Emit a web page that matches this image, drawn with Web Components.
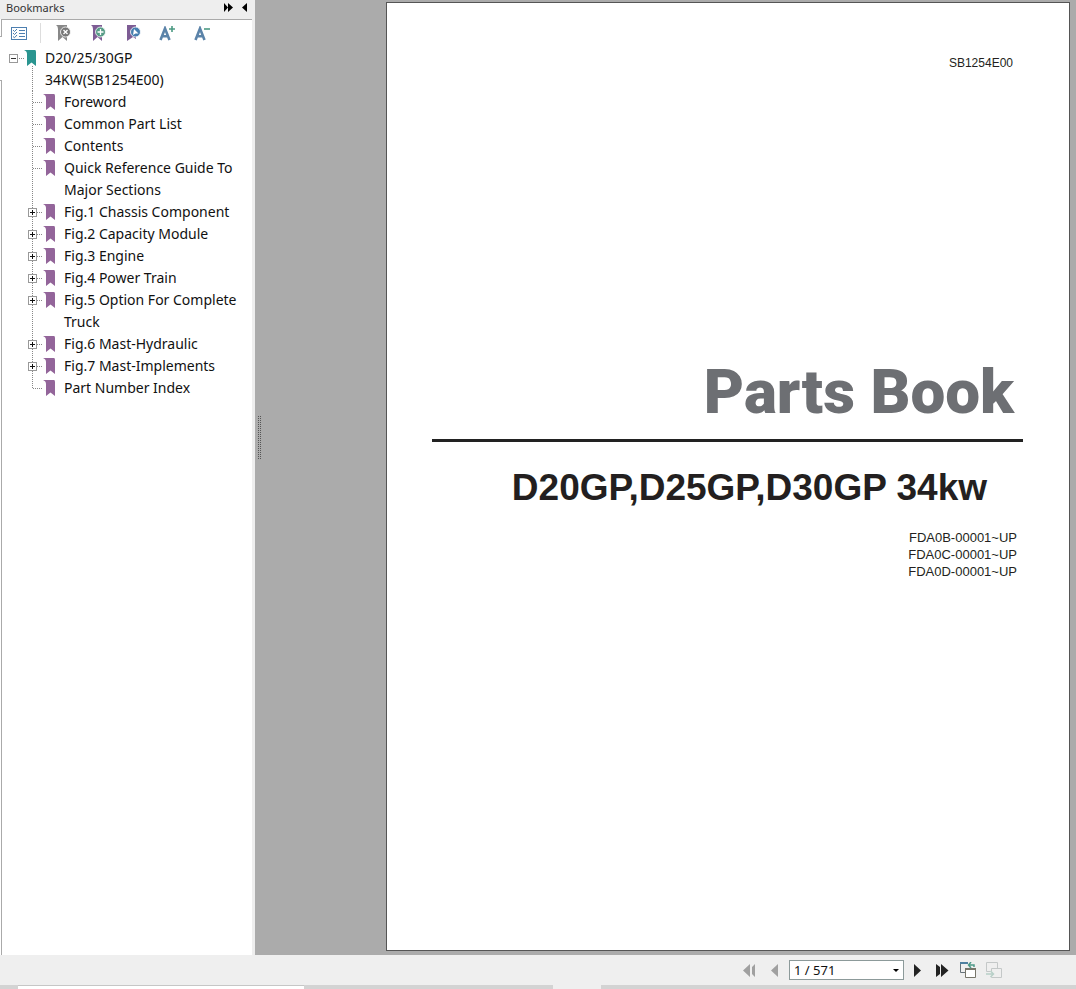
<!DOCTYPE html>
<html lang="en">
<head>
<meta charset="utf-8">
<title>Parts Book</title>
<style>
html,body{height:100%;margin:0}
body{font-family:"Noto Sans",sans-serif;background:#eee;color:#111}
</style>
</head>
<body>
<pdf-reader></pdf-reader>
<script>
const define=(name,html,setup)=>customElements.define(name,class extends HTMLElement{
  connectedCallback(){
    if(this.shadowRoot)return;
    const root=this.attachShadow({mode:'open'});
    const t=document.createElement('template');
    t.innerHTML=html;
    root.append(t.content.cloneNode(true));
    if(setup)setup(this,root);
  }
});

define('icon-button',`<style>
:host{display:flex;width:var(--w,25px);height:24px}
button{flex:1;display:flex;align-items:center;justify-content:center;padding:0;border:0;background:none;color:inherit}
</style><button type="button"><slot></slot></button>`,(el,root)=>{
  root.querySelector('button').setAttribute('aria-label',el.getAttribute('label'));
});

define('bookmark-item',`<style>
:host{display:grid;grid-template-columns:15px 12px 1fr;font-size:14px;line-height:22px;
 --across:repeating-linear-gradient(90deg,#888 0 1px,transparent 1px 2px);
 --down:repeating-linear-gradient(#888 0 1px,transparent 1px 2px)}
.rail{background:var(--down) 4px 0/1px 100% no-repeat,var(--across) 5px 11px/10px 1px no-repeat;padding-top:7px}
:host([last]) .rail{background-size:1px 11px,10px 1px}
:host([root]) .rail{background:var(--across) 10px 11px/5px 1px no-repeat}
.toggle{display:none;width:9px;height:9px;padding:0;border:1px solid #999;background:
 linear-gradient(#111,#111) center/5px 1px no-repeat,linear-gradient(#111,#111) center/1px 5px no-repeat,#fff}
:host([expandable]) .toggle{display:block}
:host([root]) .toggle{background:linear-gradient(#333,#333) center/5px 1px no-repeat,#fff}
.mark{display:flex;flex-direction:column;padding-top:3px;color:#93659a}
:host([root]) .mark{color:#2a9590}
.mark svg{flex:none}
:host([root]) .mark::after{content:"";flex:1;width:1px;margin-left:8px;background:var(--down)}
a{margin-left:9px;color:#111;text-decoration:none}
.kids{grid-column:1/-1;padding-left:19px}
</style>
<div class="rail"><button class="toggle" type="button" aria-label="Expand or collapse"></button></div>
<div class="mark"><svg width="12" height="16" viewBox="0 0 12 16"><path fill="currentColor" d="M0 0H11Q12 0 12 2V16L7.5 12.5L3 16V4Q3 1 0 0Z"/></svg></div>
<a href="#"><slot></slot></a>
<div class="kids"><slot name="child"></slot></div>`);

define('bookmark-panel',`<style>
:host{display:grid;grid-template-columns:2px 1fr 3px;grid-template-rows:19px 1fr;background:#eee;min-height:0}
header{grid-column:1/-1;display:flex;align-items:center;padding:0 3px 4px 6px;font-size:11px;line-height:15px;color:#333}
h2{margin:0 auto 0 0;font:inherit}
header icon-button{--w:16px;height:15px;color:#111}
.edge{display:flex;flex-direction:column;background:#fff}
.edge i{height:43px}
.edge::before{content:"";height:17px;border-right:1px solid #aaa;border-bottom:1px solid #aaa}
.edge::after{content:"";flex:1;border-right:1px solid #aaa;border-top:1px solid #aaa}
.body{background:#fff;border-top:1px solid #aaa}
.tools{display:flex;align-items:center;padding:1px 0 2px;height:24px}
.tools icon-button{--w:35px}
.tools icon-button:first-child{--w:34px}
.tools hr{width:1px;height:20px;margin:0 4px;border:0;background:#ddd}
.tree{padding-left:7px}
</style>
<header><h2>Bookmarks</h2>
<icon-button label="More panels"><svg width="9" height="9"><path d="M0 0L4 4.500L0 9ZM4 0L9 4.500L4 9Z"/></svg></icon-button>
<icon-button label="Collapse panel"><svg width="5" height="9"><path d="M5 0V9L0 4.500Z"/></svg></icon-button>
</header>
<div class="edge"><i></i></div>
<div class="body">
<div class="tools">
<icon-button label="Options"><svg width="16" height="13" viewBox="0 0 16 13" fill="none" stroke="#4d7fb0"><rect x=".5" y=".5" width="15" height="12"/><path d="M2 3l1.500 1.500L6 2M2 6l1.500 1.500L6 5M2 9.500l1.500 1.200L6 8M8 3.500h6M8 6.500h6M8 9.500h6"/></svg></icon-button>
<hr>
<icon-button label="Delete bookmark"><svg width="16" height="16" viewBox="0 0 16 16"><path fill="#888" d="M1 0H12V16L7.500 12L3 16V4Q3 1 1 0Z"/><circle cx="10.500" cy="7" r="5" fill="#777" stroke="#fff" stroke-width=".8"/><path d="M8.500 5l4 4M12.500 5l-4 4" stroke="#fff" stroke-width="1.300"/></svg></icon-button>
<icon-button label="Add bookmark"><svg width="16" height="16" viewBox="0 0 16 16"><path fill="#7d5c94" d="M1 0H12V16L7.500 12L3 16V4Q3 1 1 0Z"/><circle cx="10.500" cy="7" r="5" fill="#579c87" stroke="#fff" stroke-width=".8"/><path d="M7.500 7h6M10.500 4v6" stroke="#fff" stroke-width="1.300"/></svg></icon-button>
<icon-button label="Locate bookmark"><svg width="16" height="16" viewBox="0 0 16 16"><path fill="#7d5c94" d="M2 0H11V14L8 12L2 16Z"/><circle cx="10.500" cy="7" r="5" fill="#477fb0" stroke="#fff" stroke-width=".8"/><path d="M9 4L13.500 8.500L10.500 8.500L8 10Z" fill="#fff"/></svg></icon-button>
<icon-button label="Increase text size"><svg width="17" height="15" viewBox="0 0 17 15"><path fill="none" stroke="#5b83a9" stroke-width="2.600" d="M1.500 14L6 2.500L10.500 14M3 10.200H9"/><path d="M10 3h6M13 0v6" stroke="#4b9a83" stroke-width="1.600"/></svg></icon-button>
<icon-button label="Decrease text size"><svg width="17" height="15" viewBox="0 0 17 15"><path fill="none" stroke="#5b83a9" stroke-width="2.600" d="M1.500 14L6 2.500L10.500 14M3 10.200H9"/><path d="M10 3h6" stroke="#4b9a83" stroke-width="1.600"/></svg></icon-button>
</div>
<div class="tree">
<bookmark-item root expandable>D20/25/30GP<br>34KW(SB1254E00)
<bookmark-item slot="child">Foreword</bookmark-item>
<bookmark-item slot="child">Common Part List</bookmark-item>
<bookmark-item slot="child">Contents</bookmark-item>
<bookmark-item slot="child">Quick Reference Guide To<br>Major Sections</bookmark-item>
<bookmark-item slot="child" expandable>Fig.1 Chassis Component</bookmark-item>
<bookmark-item slot="child" expandable>Fig.2 Capacity Module</bookmark-item>
<bookmark-item slot="child" expandable>Fig.3 Engine</bookmark-item>
<bookmark-item slot="child" expandable>Fig.4 Power Train</bookmark-item>
<bookmark-item slot="child" expandable>Fig.5 Option For Complete<br>Truck</bookmark-item>
<bookmark-item slot="child" expandable>Fig.6 Mast-Hydraulic</bookmark-item>
<bookmark-item slot="child" expandable>Fig.7 Mast-Implements</bookmark-item>
<bookmark-item slot="child" last>Part Number Index</bookmark-item>
</bookmark-item>
</div>
</div>`);

define('document-page',`<style>
:host{display:block;box-sizing:border-box;background:#fff;border:1px solid #555;padding:52px 46px 0 45px;
 font-family:"Liberation Sans",Arial,sans-serif;color:#231f20;text-align:right}
p{margin:0;padding-right:10px;font-size:12px;line-height:17px}
h1{margin:284px 0 0;padding:0 9px 11px 0;border-bottom:3px solid #222;font:900 62px/72px Roboto,sans-serif;color:#6d6f73}
h2{margin:25px 36px 0 0;font-size:37px;line-height:42px}
.serials{margin-top:20px;padding-right:6px;font-size:13px}
</style>
<p>SB1254E00</p>
<h1>Parts Book</h1>
<h2>D20GP,D25GP,D30GP 34kw</h2>
<p class="serials">FDA0B-00001~UP<br>FDA0C-00001~UP<br>FDA0D-00001~UP</p>`);

define('page-viewer',`<style>
:host{display:grid;grid-template-columns:131px 1fr;background:#ababab;padding:2px 6px 4px 0;min-height:0}
.grip{align-self:center;width:4px;height:44px;margin:0 0 78px 3px;
 background:repeating-linear-gradient(transparent 0 1px,#ababab 1px 2px),repeating-linear-gradient(90deg,#555 0 1px,transparent 1px 2px)}
</style><div class="grip"></div><slot></slot>`);

define('page-navigation',`<style>
:host{display:flex;align-items:center;justify-content:flex-end;height:30px;padding-right:69px;background:#efefef;color:#222}
.off{color:#a0a0a0}
label{display:grid;width:115px;margin:0 1px 0 2px}
select{grid-area:1/1;appearance:none;width:100%;height:20px;border:1px solid #8c9a9a;border-radius:0;background:#fff;padding:0 4px;font:13px/18px "Noto Sans",sans-serif;color:#111}
label svg{grid-area:1/1;place-self:center end;margin-right:5px;pointer-events:none}
.wide{--w:26px}
</style>
<icon-button class="off" label="First page"><svg width="13" height="13" fill="currentColor"><path d="M7 0V13L0 6.500ZM12 0V13L9 10V3Z"/></svg></icon-button>
<icon-button class="off" label="Previous page"><svg width="7" height="13" fill="currentColor"><path d="M7 0V13L0 6.500Z"/></svg></icon-button>
<label><select aria-label="Page"><option>1 / 571</option></select><svg width="6" height="3"><path d="M0 0H6L3 3Z"/></svg></label>
<icon-button label="Next page"><svg width="8" height="13" fill="currentColor"><path d="M0 0V13L7 6.500Z"/></svg></icon-button>
<icon-button label="Last page"><svg width="14" height="13" fill="currentColor"><path d="M5 0V13L12.500 6.500ZM0 0V13L4 10V3Z"/></svg></icon-button>
<icon-button class="wide" label="Previous view"><svg width="16" height="16" viewBox="0 0 16 16" fill="none"><path d="M5 10.500H.5V.5H8" stroke="#67737a"/><path d="M0 1h8" stroke="#4f80a0" stroke-width="2"/><path d="M5.500 6.500h10v9h-10z" fill="#fff" stroke="#77756a"/><path d="M5 7h11" stroke="#77756a" stroke-width="2"/><path d="M14 5V3H9M11 0L8.500 3L11 6" stroke="#4e9a88" stroke-width="1.500"/></svg></icon-button>
<icon-button class="wide" label="Next view"><svg width="16" height="16" viewBox="0 0 16 16" fill="none" stroke="#c4c8c8"><path d="M4 9.500H.5V.5H11.500V6M5.500 9V6.500h10v9h-10v-1"/><path d="M0 12H7M4.500 9L7.500 12L4.500 15" stroke="#b8d0c8" stroke-width="1.500"/></svg></icon-button>`);

define('pdf-reader',`<style>
:host{display:grid;grid-template-columns:255px 1fr;grid-template-rows:1fr 30px 4px;min-height:100vh}
page-navigation,.strip{grid-column:1/-1}
.strip{display:grid;grid-template-columns:18px 286px 249px 48px 1fr;background:#d3d3d3}
.strip i:nth-child(2){background:#fff;border-top:1px solid #c6c6c6}
.strip i:nth-child(4){background:#efefef}
</style>
<bookmark-panel></bookmark-panel>
<page-viewer><document-page></document-page></page-viewer>
<page-navigation></page-navigation>
<div class="strip"><i></i><i></i><i></i><i></i><i></i></div>`);
</script>
</body>
</html>
